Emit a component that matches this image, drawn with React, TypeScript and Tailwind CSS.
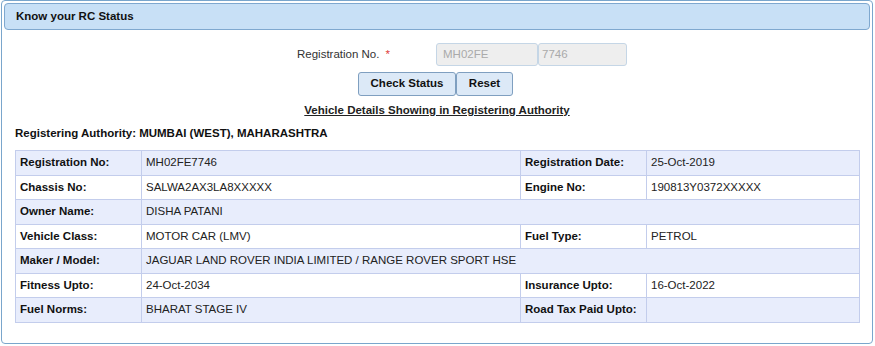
import React from "react";

type Row = { l1: string; v1: string; l2?: string; v2?: string; span?: boolean };

const rows: Row[] = [
  { l1: "Registration No:", v1: "MH02FE7746", l2: "Registration Date:", v2: "25-Oct-2019" },
  { l1: "Chassis No:", v1: "SALWA2AX3LA8XXXXX", l2: "Engine No:", v2: "190813Y0372XXXXX" },
  { l1: "Owner Name:", v1: "DISHA PATANI", span: true },
  { l1: "Vehicle Class:", v1: "MOTOR CAR (LMV)", l2: "Fuel Type:", v2: "PETROL" },
  { l1: "Maker / Model:", v1: "JAGUAR LAND ROVER INDIA LIMITED / RANGE ROVER SPORT HSE", span: true },
  { l1: "Fitness Upto:", v1: "24-Oct-2034", l2: "Insurance Upto:", v2: "16-Oct-2022" },
  { l1: "Fuel Norms:", v1: "BHARAT STAGE IV", l2: "Road Tax Paid Upto:", v2: "" },
];

export default function App() {
  return (
    <div
      className="w-[875px] h-[346px] bg-white text-[11.5px] text-[#222]"
      style={{ fontFamily: '"Liberation Sans", Arial, sans-serif' }}
    >
      <div className="ml-[1px] mt-[0px] w-[872px] h-[344px] border border-[#7aa6cc] rounded-[4px] p-[2px]">
        <div className="h-[27px] border border-[#7fa8cf] rounded-[4px] bg-[#c8e0f6] flex items-center pl-[11px] font-bold text-[11.5px] text-[#111]">
          Know your RC Status
        </div>
        <div className="flex items-center mt-[13px] h-[23px]">
          <div className="w-[293px]" />
          <div className="w-[139px] flex items-center">
            <span className="text-[11.5px] text-[#333]">Registration No.</span>
            <span className="text-[#e04040] ml-[6px]">*</span>
          </div>
          <div className="w-[102px] h-[23px] border border-[#c5d6e6] rounded-[3px] bg-[#eeeeee] text-[#aaa] text-[11.5px] flex items-center pl-[6px]">
            MH02FE
          </div>
          <div className="w-[89px] h-[23px] border border-[#c5d6e6] rounded-[3px] bg-[#eeeeee] text-[#aaa] text-[11.5px] flex items-center pl-[3px]">
            7746
          </div>
        </div>
        <div className="flex mt-[6px] h-[24px]">
          <div className="w-[354px]" />
          <button className="w-[98px] h-[24px] border border-[#7f9fc0] rounded-[3px] bg-[#dce9f7] font-bold text-[11.5px] text-[#111]">
            Check Status
          </button>
          <button className="w-[57px] h-[24px] border border-[#7f9fc0] rounded-[3px] bg-[#dce9f7] font-bold text-[11.5px] text-[#111]">
            Reset
          </button>
        </div>
        <div className="text-center mt-[6px] h-[16px] leading-[16px] font-bold underline text-[11.5px] text-[#222]">
          Vehicle Details Showing in Registering Authority
        </div>
        <div className="mt-[7px] ml-[11px] font-bold text-[11.5px] text-[#111] h-[16px] leading-[16px]">
          Registering Authority: MUMBAI (WEST), MAHARASHTRA
        </div>
        <div className="ml-[11px] mt-[9px] w-[844px]">
          <table className="w-[844px] border-collapse table-fixed">
            <colgroup>
              <col className="w-[126px]" />
              <col className="w-[379px]" />
              <col className="w-[126px]" />
              <col className="w-[213px]" />
            </colgroup>
            <tbody>
              {rows.map((r, i) => (
                <tr key={i} className={i % 2 === 0 ? "bg-[#e8edfc]" : "bg-white"}>
                  <td className="border border-[#c3cdec] h-[24.5px] px-[4px] font-bold text-[#111]">{r.l1}</td>
                  {r.span ? (
                    <td colSpan={3} className="border border-[#c3cdec] px-[4px] text-[#222]">{r.v1}</td>
                  ) : (
                    <>
                      <td className="border border-[#c3cdec] px-[4px] text-[#222]">{r.v1}</td>
                      <td className="border border-[#c3cdec] px-[4px] font-bold text-[#111]">{r.l2}</td>
                      <td className="border border-[#c3cdec] px-[4px] text-[#222]">{r.v2}</td>
                    </>
                  )}
                </tr>
              ))}
            </tbody>
          </table>
        </div>
      </div>
    </div>
  );
}
